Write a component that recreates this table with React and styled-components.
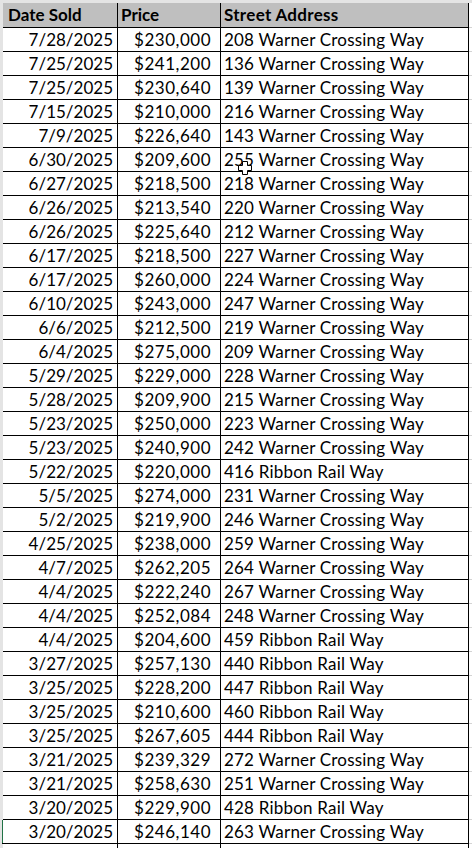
import React from "react";
import styled, { createGlobalStyle } from "styled-components";

const GlobalStyle = createGlobalStyle`
  html, body { margin: 0; padding: 0; background: #ffffff; }
  body { font-family: Lato, "Open Sans", sans-serif; }
`;

const rows = [
  ["7/28/2025", "$230,000", "208 Warner Crossing Way"],
  ["7/25/2025", "$241,200", "136 Warner Crossing Way"],
  ["7/25/2025", "$230,640", "139 Warner Crossing Way"],
  ["7/15/2025", "$210,000", "216 Warner Crossing Way"],
  ["7/9/2025", "$226,640", "143 Warner Crossing Way"],
  ["6/30/2025", "$209,600", "255 Warner Crossing Way"],
  ["6/27/2025", "$218,500", "218 Warner Crossing Way"],
  ["6/26/2025", "$213,540", "220 Warner Crossing Way"],
  ["6/26/2025", "$225,640", "212 Warner Crossing Way"],
  ["6/17/2025", "$218,500", "227 Warner Crossing Way"],
  ["6/17/2025", "$260,000", "224 Warner Crossing Way"],
  ["6/10/2025", "$243,000", "247 Warner Crossing Way"],
  ["6/6/2025", "$212,500", "219 Warner Crossing Way"],
  ["6/4/2025", "$275,000", "209 Warner Crossing Way"],
  ["5/29/2025", "$229,000", "228 Warner Crossing Way"],
  ["5/28/2025", "$209,900", "215 Warner Crossing Way"],
  ["5/23/2025", "$250,000", "223 Warner Crossing Way"],
  ["5/23/2025", "$240,900", "242 Warner Crossing Way"],
  ["5/22/2025", "$220,000", "416 Ribbon Rail Way"],
  ["5/5/2025", "$274,000", "231 Warner Crossing Way"],
  ["5/2/2025", "$219,900", "246 Warner Crossing Way"],
  ["4/25/2025", "$238,000", "259 Warner Crossing Way"],
  ["4/7/2025", "$262,205", "264 Warner Crossing Way"],
  ["4/4/2025", "$222,240", "267 Warner Crossing Way"],
  ["4/4/2025", "$252,084", "248 Warner Crossing Way"],
  ["4/4/2025", "$204,600", "459 Ribbon Rail Way"],
  ["3/27/2025", "$257,130", "440 Ribbon Rail Way"],
  ["3/25/2025", "$228,200", "447 Ribbon Rail Way"],
  ["3/25/2025", "$210,600", "460 Ribbon Rail Way"],
  ["3/25/2025", "$267,605", "444 Ribbon Rail Way"],
  ["3/21/2025", "$239,329", "272 Warner Crossing Way"],
  ["3/21/2025", "$258,630", "251 Warner Crossing Way"],
  ["3/20/2025", "$229,900", "428 Ribbon Rail Way"],
  ["3/20/2025", "$246,140", "263 Warner Crossing Way"],
];

const Sheet = styled.div`
  position: relative;
  width: 472px;
  height: 848px;
  overflow: hidden;
  box-sizing: border-box;
  padding-top: 3px;
  padding-left: 3px;
  background: linear-gradient(#e4e4e4, #e4e4e4) top left / 100% 3px no-repeat,
    linear-gradient(#e4e4e4, #e4e4e4) top left / 3px 100% no-repeat, #ffffff;
  display: flex;
  flex-direction: column;
`;

const Row = styled.div`
  display: grid;
  grid-template-columns: 115px 103px 248px 1fr;
  height: ${(p) => (p.$header ? 25 : 24)}px;
  flex-shrink: 0;
`;

const Cell = styled.div`
  box-sizing: border-box;
  border-right: 1px solid #000;
  border-bottom: 1px solid #000;
  background: ${(p) => (p.$header ? "#bfbfbf" : "#ffffff")};
  ${(p) => (p.$active ? "box-shadow: inset 1px 0 0 #217346; margin-left: -1px;" : "")}
  color: #000;
  font-size: 17px;
  font-weight: ${(p) => (p.$header ? 700 : 400)};
  letter-spacing: ${(p) => p.$ls || "0"};
  line-height: 23px;
  white-space: nowrap;
  overflow: hidden;
  text-align: ${(p) => p.$align || "left"};
  padding: ${(p) => p.$pad || "0 0 0 3px"};
`;

const Filler = styled.div`
  box-sizing: border-box;
  border-bottom: 1px solid #d4d4d4;
  background: #ffffff;
`;

const Cursor = styled.svg`
  position: absolute;
  left: 238px;
  top: 161px;
  width: 14px;
  height: 14px;
  pointer-events: none;
`;

export default function App() {
  return (
    <>
      <GlobalStyle />
      <Sheet>
        <Row $header>
          <Cell $header $pad="0 0 0 5px">Date Sold</Cell>
          <Cell $header $pad="0 0 0 3px">Price</Cell>
          <Cell $header $ls="0.3px">Street Address</Cell>
          <Filler />
        </Row>
        {rows.map((r, i) => (
          <Row key={i}>
            <Cell $align="right" $pad="0 4px 0 0" $active={i === rows.length - 1}>
              {r[0]}
            </Cell>
            <Cell $align="right" $pad="0 9px 0 0" $ls="0.5px">
              {r[1]}
            </Cell>
            <Cell $ls="0.2px">{r[2]}</Cell>
            <Filler />
          </Row>
        ))}
        <Row>
          <Cell />
          <Cell />
          <Cell />
          <Filler />
        </Row>
        <Cursor viewBox="0 0 14 14">
          <path
            d="M4.5 0.5 H9.5 V4.5 H13.5 V9.5 H9.5 V13.5 H4.5 V9.5 H0.5 V4.5 H4.5 Z"
            fill="#fff"
            stroke="#000"
            strokeWidth="1"
          />
        </Cursor>
      </Sheet>
    </>
  );
}
